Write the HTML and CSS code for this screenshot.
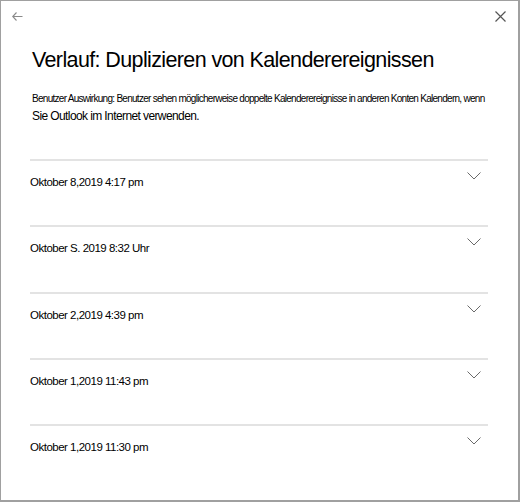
FILE: index.html
```html
<!DOCTYPE html>
<html lang="de">
<head>
<meta charset="utf-8">
<link rel="stylesheet" href="styles.css">
</head>
<body>
<div class="panel">
  <div class="topbar">
    <svg class="back" width="11" height="9" viewBox="0 0 11 9"><path d="M4.5 0.5 L0.7 4.5 L4.5 8.5 M0.7 4.5 H10.5" fill="none" stroke="#8a8a8a" stroke-width="1.1"/></svg>
    <svg class="close" width="11" height="11" viewBox="0 0 11 11"><path d="M0.5 0.5 L10.5 10.5 M10.5 0.5 L0.5 10.5" fill="none" stroke="#555" stroke-width="1.2"/></svg>
  </div>
  <h1 class="title">Verlauf: Duplizieren von Kalenderereignissen</h1>
  <p class="desc"><span class="small">Benutzer Auswirkung: Benutzer sehen möglicherweise doppelte Kalenderereignisse in anderen Konten Kalendern, wenn</span><br><span class="big">Sie Outlook im Internet verwenden.</span></p>
  <ul class="list">
    <li class="row"><span>Oktober 8,2019 4:17 pm</span><svg class="chev" width="14" height="8" viewBox="0 0 14 8"><path d="M0.5 0.5 L7 7 L13.5 0.5" fill="none" stroke="#6a6a6a" stroke-width="1"/></svg></li>
    <li class="row"><span>Oktober S. 2019 8:32 Uhr</span><svg class="chev" width="14" height="8" viewBox="0 0 14 8"><path d="M0.5 0.5 L7 7 L13.5 0.5" fill="none" stroke="#6a6a6a" stroke-width="1"/></svg></li>
    <li class="row"><span>Oktober 2,2019 4:39 pm</span><svg class="chev" width="14" height="8" viewBox="0 0 14 8"><path d="M0.5 0.5 L7 7 L13.5 0.5" fill="none" stroke="#6a6a6a" stroke-width="1"/></svg></li>
    <li class="row"><span>Oktober 1,2019 11:43 pm</span><svg class="chev" width="14" height="8" viewBox="0 0 14 8"><path d="M0.5 0.5 L7 7 L13.5 0.5" fill="none" stroke="#6a6a6a" stroke-width="1"/></svg></li>
    <li class="row"><span>Oktober 1,2019 11:30 pm</span><svg class="chev" width="14" height="8" viewBox="0 0 14 8"><path d="M0.5 0.5 L7 7 L13.5 0.5" fill="none" stroke="#6a6a6a" stroke-width="1"/></svg></li>
  </ul>
</div>
</body>
</html>
```
FILE: styles.css
```css
html, body { margin: 0; padding: 0; background: #fff; }
body { font-family: "Liberation Sans", Arial, sans-serif; color: #000; }
.panel {
  box-sizing: border-box;
  width: 520px;
  height: 502px;
  border: 1px solid #a0a0a0;
  border-right-width: 2px;
  border-bottom-width: 2px;
  padding: 0 30px 0 29px;
}
.topbar {
  display: flex;
  justify-content: space-between;
  margin: 9px -18px 0 -18px;
  height: 12px;
  align-items: center;
}
.title {
  margin: 23px 0 0 2px;
  font-weight: normal;
  font-size: 21.5px;
  line-height: 30px;
  letter-spacing: -0.62px;
  white-space: nowrap;
}
.desc { margin: 14px 0 0 2px; line-height: 16px; white-space: nowrap; }
.small { font-size: 10px; letter-spacing: -0.72px; }
.big { font-size: 12px; letter-spacing: -0.6px; }
.list { list-style: none; margin: 35px 0 0; padding: 0; }
.row {
  border-top: 2px solid #e3e3e3;
  height: 64.25px;
  display: flex;
  justify-content: space-between;
  align-items: flex-start;
  font-size: 11.5px;
  letter-spacing: -0.5px;
}
.row span { margin-top: 15px; }
.chev { margin: 11px 7px 0 0; }
```
